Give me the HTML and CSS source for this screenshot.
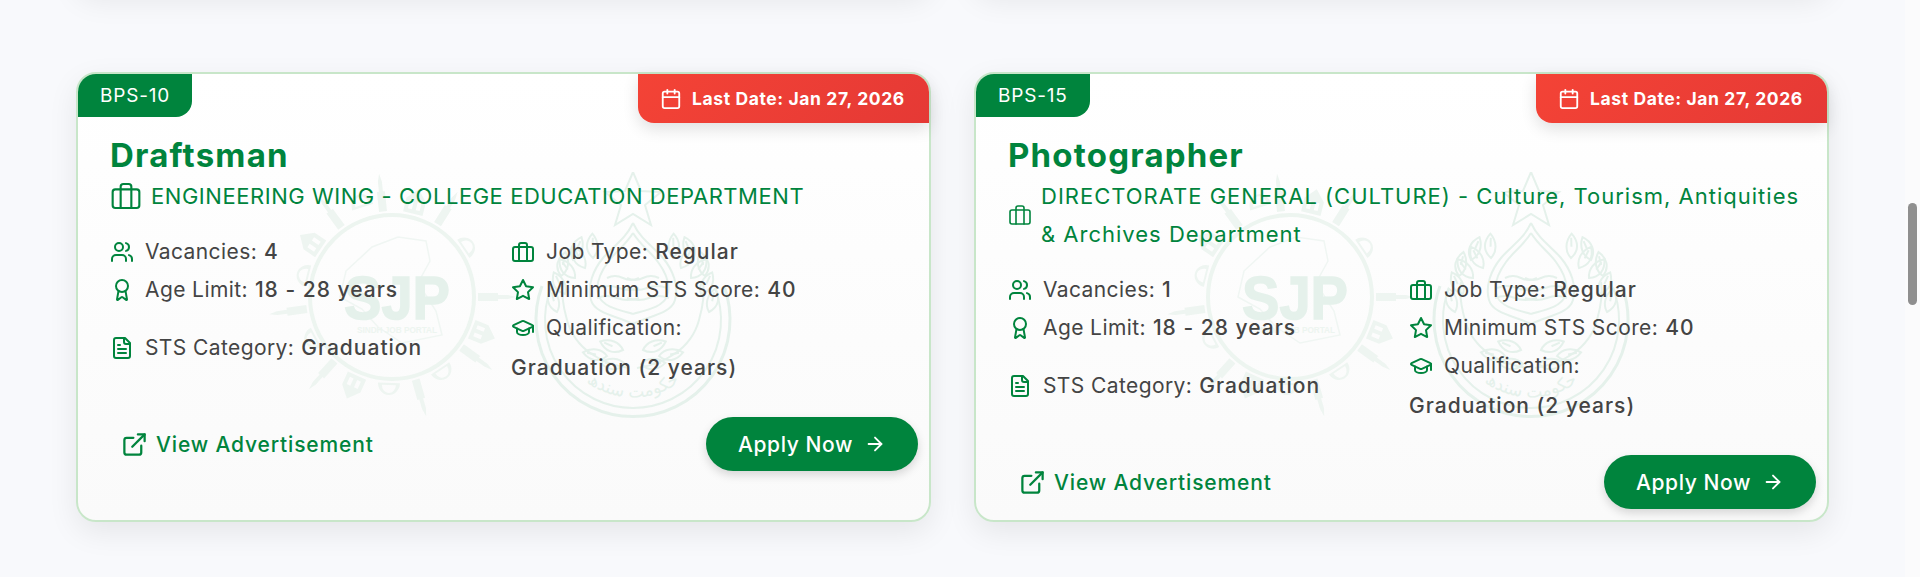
FILE: index.html
```html
<!DOCTYPE html>
<html lang="en">
<head>
  <meta charset="UTF-8" />
  <meta name="viewport" content="width=device-width, initial-scale=1.0"/>
  <title>Jobs</title>
  <link rel="stylesheet" href="styles.css">
</head>
<body>
  <!-- shared icons and the faint seal artwork -->
  <svg class="sprites" aria-hidden="true">
    <symbol id="i-briefcase" viewBox="0 0 24 24"><rect width="20" height="14" x="2" y="7" rx="2" ry="2"/><path d="M16 21V5a2 2 0 0 0-2-2h-4a2 2 0 0 0-2 2v16"/></symbol>
    <symbol id="i-users" viewBox="0 0 24 24"><path d="M16 21v-2a4 4 0 0 0-4-4H6a4 4 0 0 0-4 4v2"/><circle cx="9" cy="7" r="4"/><path d="M22 21v-2a4 4 0 0 0-3-3.87"/><path d="M16 3.13a4 4 0 0 1 0 7.75"/></symbol>
    <symbol id="i-award" viewBox="0 0 24 24"><path d="m15.477 12.89 1.515 8.526a.5.5 0 0 1-.81.47l-3.58-2.687a1 1 0 0 0-1.197 0l-3.586 2.686a.5.5 0 0 1-.81-.469l1.514-8.526"/><circle cx="12" cy="8" r="6"/></symbol>
    <symbol id="i-star" viewBox="0 0 24 24"><polygon points="12 2 15.09 8.26 22 9.27 17 14.14 18.18 21.02 12 17.77 5.82 21.02 7 14.14 2 9.27 8.91 8.26 12 2"/></symbol>
    <symbol id="i-cap" viewBox="0 0 24 24"><path d="M21.42 10.922a1 1 0 0 0-.019-1.838L12.83 5.18a2 2 0 0 0-1.66 0L2.6 9.08a1 1 0 0 0 0 1.832l8.57 3.908a2 2 0 0 0 1.66 0z"/><path d="M22 10v6"/><path d="M6 12.5V16a6 3 0 0 0 12 0v-3.5"/></symbol>
    <symbol id="i-file" viewBox="0 0 24 24"><path d="M15 2H6a2 2 0 0 0-2 2v16a2 2 0 0 0 2 2h12a2 2 0 0 0 2-2V7Z"/><path d="M14 2v4a2 2 0 0 0 2 2h4"/><path d="M10 9H8"/><path d="M16 13H8"/><path d="M16 17H8"/></symbol>
    <symbol id="i-calendar" viewBox="0 0 24 24"><path d="M8 2v4"/><path d="M16 2v4"/><rect width="18" height="18" x="3" y="4" rx="2"/><path d="M3 10h18"/></symbol>
    <symbol id="i-external" viewBox="0 0 24 24"><path d="M15 3h6v6"/><path d="M10 14 21 3"/><path d="M18 13v6a2 2 0 0 1-2 2H5a2 2 0 0 1-2-2V8a2 2 0 0 1 2-2h6"/></symbol>
    <symbol id="i-arrow" viewBox="0 0 24 24"><path d="M5 12h14"/><path d="m12 5 7 7-7 7"/></symbol>

    <g id="sjp-spoke"><path d="M-4 -86 L-4 -106 L-2 -106 L-2 -116 L0 -124 L2 -116 L2 -106 L4 -106 L4 -86 Z"/></g>
    <g id="sjp-house"><path fill-rule="evenodd" d="M-10 -86 L-10 -100 L0 -111 L10 -100 L10 -86 Z M-6 -90 L-2 -90 L-2 -98 L-6 -98 Z M2 -90 L6 -90 L6 -98 L2 -98 Z"/></g>
    <g id="sjp-dome"><path fill-rule="evenodd" d="M-11 -86 A11 12 0 0 1 11 -86 Z M-7 -88 L7 -88 A7 8 0 0 0 -7 -88 Z"/></g>

    <g id="seal-leaf">
      <path d="M0 0 C-9 -6 -10 -15 -4 -24 C4 -17 5 -7 0 0 Z"/>
      <path d="M-2 -11 L-3 -20"/>
    </g>
    <g id="seal-half">
      <path d="M0 -97 C-8 -80 -20 -74 -30 -62 C-40 -50 -46 -34 -42 -20 C-38 -6 -16 -4 0 4"/>
      <path d="M0 -87 C-8 -74 -18 -68 -25 -58 C-33 -47 -38 -34 -34 -24 C-30 -13 -14 -10 0 -6"/>
      <use href="#seal-leaf" transform="translate(-40 -62) rotate(8)"/>
      <use href="#seal-leaf" transform="translate(-48 -52) rotate(-20)"/>
      <use href="#seal-leaf" transform="translate(-58 -42) rotate(-30)"/>
      <use href="#seal-leaf" transform="translate(-68 -26) rotate(-18)"/>
      <use href="#seal-leaf" transform="translate(-76 -8) rotate(-6)"/>
      <use href="#seal-leaf" transform="translate(-60 -60) rotate(30)"/>
      <use href="#seal-leaf" transform="translate(-72 -44) rotate(20)"/>
      <use href="#seal-leaf" transform="translate(-10 30) rotate(-60)"/>
      <use href="#seal-leaf" transform="translate(-26 36) rotate(-72)"/>
      <use href="#seal-leaf" transform="translate(-8 44) rotate(-78)"/>
      <path d="M-4 48 C-30 44 -58 30 -66 0 C-70 -14 -72 -26 -70 -38"/>
      <path d="M-26 -42 Q-18 -46 -10 -42 T6 -42"/>
      <path d="M-34 -32 Q-24 -36 -14 -32 T6 -32"/>
      <path d="M-36 -22 Q-26 -26 -16 -22 T6 -22"/>
    </g>
    <symbol id="watermark" viewBox="0 0 480 250">
      <g class="wm-sjp" transform="translate(128 125)">
        <circle class="wm-ring" r="82"/>
        <path class="wm-map" d="M-46 -26 L-20 -50 L6 -60 L34 -56 L38 -36 L26 -14 L44 14 L50 38 L10 46 L-14 30 L-30 12 L-52 0 Z"/>
        <use href="#sjp-spoke" transform="rotate(-36)"/>
        <use href="#sjp-dome" transform="rotate(-18) scale(1 1.1)"/>
        <use href="#sjp-spoke" transform="rotate(-6)"/>
        <use href="#sjp-house" transform="rotate(14)"/>
        <use href="#sjp-spoke" transform="rotate(32)"/>
        <use href="#sjp-dome" transform="rotate(56)"/>
        <use href="#sjp-spoke" transform="rotate(90)"/>
        <use href="#sjp-house" transform="rotate(112)"/>
        <use href="#sjp-spoke" transform="rotate(126)"/>
        <use href="#sjp-dome" transform="rotate(146)"/>
        <use href="#sjp-spoke" transform="rotate(164)"/>
        <use href="#sjp-dome" transform="rotate(182)"/>
        <use href="#sjp-house" transform="rotate(204)"/>
        <use href="#sjp-spoke" transform="rotate(222)"/>
        <use href="#sjp-dome" transform="rotate(242)"/>
        <use href="#sjp-spoke" transform="rotate(262)"/>
        <use href="#sjp-dome" transform="rotate(284)"/>
        <use href="#sjp-house" transform="rotate(304)"/>
        <text class="wm-logo" x="5" y="22" text-anchor="middle" textLength="106" lengthAdjust="spacingAndGlyphs">SJP</text>
        <text class="wm-tag" x="5" y="36" text-anchor="middle" textLength="80" lengthAdjust="spacingAndGlyphs">SINDH JOB PORTAL</text>
      </g>
      <g class="wm-seal" transform="translate(369 148)">
        <polygon points="0,-148 8,-129 28,-128 12,-115 18,-95 0,-106 -18,-95 -12,-115 -28,-128 -8,-129"/>
        <path class="wm-thick" d="M-91 -34 A97 97 0 1 0 91 -34"/>
        <path d="M-82 -32 A88 88 0 1 0 82 -32"/>
        <use href="#seal-half"/>
        <use href="#seal-half" transform="scale(-1 1)"/>
        <path id="seal-arc" class="wm-none" d="M-74 24 A78 78 0 0 0 74 24"/>
        <text class="wm-urdu"><textPath href="#seal-arc" startOffset="50%" text-anchor="middle">حکومت سندھ</textPath></text>
      </g>
    </symbol>
  </svg>

  <div class="page">
    <main class="board">
      <div class="card-stub"></div>
      <div class="card-stub"></div>

      <article class="job-card">
        <svg class="card-watermark"><use href="#watermark"/></svg>
        <span class="bps-badge">BPS-10</span>
        <span class="last-date"><svg class="icon date-icon"><use href="#i-calendar"/></svg>Last Date: Jan 27, 2026</span>
        <h2 class="job-title">Draftsman</h2>
        <div class="dept">
          <svg class="icon dept-icon"><use href="#i-briefcase"/></svg>
          <span class="dept-name">ENGINEERING WING - COLLEGE EDUCATION DEPARTMENT</span>
        </div>
        <div class="details">
          <div class="detail"><svg class="icon"><use href="#i-users"/></svg><span>Vacancies:</span><strong>4</strong></div>
          <div class="detail"><svg class="icon"><use href="#i-briefcase"/></svg><span>Job Type:</span><strong>Regular</strong></div>
          <div class="detail"><svg class="icon"><use href="#i-award"/></svg><span>Age Limit:</span><strong>18 - 28 years</strong></div>
          <div class="detail"><svg class="icon"><use href="#i-star"/></svg><span>Minimum STS Score:</span><strong>40</strong></div>
          <div class="detail"><svg class="icon"><use href="#i-file"/></svg><span>STS Category:</span><strong>Graduation</strong></div>
          <div class="detail detail-wrap"><svg class="icon"><use href="#i-cap"/></svg><span>Qualification:</span><strong>Graduation (2 years)</strong></div>
        </div>
        <div class="card-actions">
          <a class="view-link" href="#"><svg class="icon link-icon"><use href="#i-external"/></svg>View Advertisement</a>
          <a class="apply-btn" href="#">Apply Now<svg class="icon arrow-icon"><use href="#i-arrow"/></svg></a>
        </div>
      </article>

      <article class="job-card">
        <svg class="card-watermark"><use href="#watermark"/></svg>
        <span class="bps-badge">BPS-15</span>
        <span class="last-date"><svg class="icon date-icon"><use href="#i-calendar"/></svg>Last Date: Jan 27, 2026</span>
        <h2 class="job-title">Photographer</h2>
        <div class="dept dept-long">
          <svg class="icon dept-icon"><use href="#i-briefcase"/></svg>
          <span class="dept-name">DIRECTORATE GENERAL (CULTURE) - Culture, Tourism, Antiquities &amp; Archives Department</span>
        </div>
        <div class="details">
          <div class="detail"><svg class="icon"><use href="#i-users"/></svg><span>Vacancies:</span><strong>1</strong></div>
          <div class="detail"><svg class="icon"><use href="#i-briefcase"/></svg><span>Job Type:</span><strong>Regular</strong></div>
          <div class="detail"><svg class="icon"><use href="#i-award"/></svg><span>Age Limit:</span><strong>18 - 28 years</strong></div>
          <div class="detail"><svg class="icon"><use href="#i-star"/></svg><span>Minimum STS Score:</span><strong>40</strong></div>
          <div class="detail"><svg class="icon"><use href="#i-file"/></svg><span>STS Category:</span><strong>Graduation</strong></div>
          <div class="detail detail-wrap"><svg class="icon"><use href="#i-cap"/></svg><span>Qualification:</span><strong>Graduation (2 years)</strong></div>
        </div>
        <div class="card-actions">
          <a class="view-link" href="#"><svg class="icon link-icon"><use href="#i-external"/></svg>View Advertisement</a>
          <a class="apply-btn" href="#">Apply Now<svg class="icon arrow-icon"><use href="#i-arrow"/></svg></a>
        </div>
      </article>
    </main>
    <div class="scroll-track"><div class="scroll-thumb"></div></div>
  </div>
</body>
</html>
```

FILE: styles.css
```css
* {
  box-sizing: border-box;
}

body {
  margin: 0;
  font-family: 'Inter', 'Liberation Sans', sans-serif;
  background: #f8f9fc;
  color: #444;
}

.sprites {
  display: none;
}

.page {
  display: flex;
  height: 577px;
  overflow: hidden;
}

.board {
  flex: 1;
  display: grid;
  grid-template-columns: 855px 855px;
  column-gap: 43px;
  row-gap: 82px;
  align-content: start;
  align-items: stretch;
  margin-top: -60px;
  padding: 0 76px;
}

.card-stub {
  height: 50px;
  background: #fff;
  border-radius: 20px;
  box-shadow: 0 10px 30px rgba(0, 0, 0, 0.08);
}

.job-card {
  position: relative;
  background: linear-gradient(180deg, #ffffff, #fafafa);
  border: 2px solid #c8e6c9;
  border-radius: 20px;
  padding: 59px 11px 11px 32px;
  box-shadow: 0 10px 30px rgba(0, 0, 0, 0.08);
}

.card-watermark {
  position: absolute;
  left: 186px;
  top: 98px;
  width: 480px;
  height: 250px;
}

.wm-sjp {
  fill: #eef5f1;
  stroke: none;
}

.wm-ring {
  fill: none;
  stroke: #edf5f0;
  stroke-width: 4;
}

.wm-map {
  fill: none;
  stroke: #f0f6f3;
  stroke-width: 1.5;
}

.wm-logo {
  font-family: 'Liberation Sans', sans-serif;
  font-weight: 700;
  font-size: 62px;
  fill: #e5f1eb;
  stroke: #e5f1eb;
  stroke-width: 1.5;
}

.wm-tag {
  font-family: 'Liberation Sans', sans-serif;
  font-weight: 700;
  font-size: 9.5px;
  fill: #edf5f0;
}

.wm-seal {
  fill: none;
  stroke: #e5f1eb;
  stroke-width: 2;
}

.wm-thick {
  stroke-width: 3;
}

.wm-none {
  stroke: none;
}

.wm-urdu {
  font-family: 'DejaVu Sans', sans-serif;
  font-size: 17px;
  fill: #e5f1eb;
  stroke: none;
}

.bps-badge {
  position: absolute;
  left: 0;
  top: 0;
  height: 43px;
  width: 114px;
  padding-left: 22px;
  line-height: 43px;
  font-size: 19px;
  letter-spacing: 0.8px;
  color: #fff;
  background: #00843d;
  border-radius: 18px 0 16px 0;
}

.last-date {
  position: absolute;
  right: 0;
  top: 0;
  height: 49px;
  width: 291px;
  padding-left: 22px;
  display: flex;
  align-items: center;
  gap: 10px;
  font-size: 17.5px;
  letter-spacing: 0.6px;
  font-weight: 700;
  white-space: nowrap;
  color: #fff;
  background: linear-gradient(135deg, #f44336, #e53935);
  border-radius: 0 18px 0 16px;
  box-shadow: 0 6px 16px rgba(0, 0, 0, 0.12);
}

.icon {
  flex: none;
  width: 24px;
  height: 24px;
  fill: none;
  stroke: #00843d;
  stroke-width: 2;
  stroke-linecap: round;
  stroke-linejoin: round;
}

.date-icon {
  width: 22px;
  height: 22px;
  stroke: #fff;
}

.job-title {
  position: relative;
  margin: 0;
  font-size: 33px;
  line-height: 44px;
  letter-spacing: 1.2px;
  font-weight: 700;
  color: #00843d;
}

.dept {
  position: relative;
  display: flex;
  align-items: center;
  gap: 9px;
  margin-bottom: 18px;
  font-size: 22px;
  line-height: 38px;
  letter-spacing: 0.55px;
  color: #00843d;
}

.dept-icon {
  width: 32px;
  height: 32px;
  stroke-width: 1.6;
}

.dept-long {
  letter-spacing: 1px;
}

.dept-long .dept-icon {
  width: 24px;
  height: 24px;
}

.details {
  position: relative;
  display: grid;
  grid-template-columns: 401px 1fr;
  align-items: center;
}

.detail {
  display: flex;
  flex-wrap: wrap;
  align-items: center;
  column-gap: 7px;
  min-height: 38px;
  font-size: 21px;
  line-height: 38px;
  letter-spacing: 0.4px;
}

.detail .icon {
  margin-right: 4px;
}

.detail strong {
  font-weight: 500;
  letter-spacing: 1px;
}

.detail-wrap strong {
  flex-basis: 100%;
  margin-top: 2px;
}

.card-actions {
  position: relative;
  display: flex;
  justify-content: space-between;
  align-items: center;
  margin-top: 30px;
}

.view-link {
  display: flex;
  align-items: center;
  gap: 8px;
  padding-left: 11px;
  font-size: 21px;
  letter-spacing: 0.85px;
  font-weight: 500;
  color: #00843d;
  text-decoration: none;
}

.link-icon {
  width: 27px;
  height: 27px;
}

.apply-btn {
  display: flex;
  align-items: center;
  gap: 11px;
  justify-content: center;
  width: 212px;
  height: 54px;
  border-radius: 27px;
  font-size: 21px;
  letter-spacing: 0.6px;
  font-weight: 500;
  color: #fff;
  text-decoration: none;
  background: #00843d;
  box-shadow: 0 4px 10px rgba(0, 0, 0, 0.15);
}

.arrow-icon {
  width: 22px;
  height: 22px;
  stroke: #fff;
}

.scroll-track {
  flex: none;
  width: 15px;
  background: #fbfbfc;
  padding: 203px 3px 0;
}

.scroll-thumb {
  height: 102px;
  background: #8f8f8f;
  border-radius: 5px;
}
```
